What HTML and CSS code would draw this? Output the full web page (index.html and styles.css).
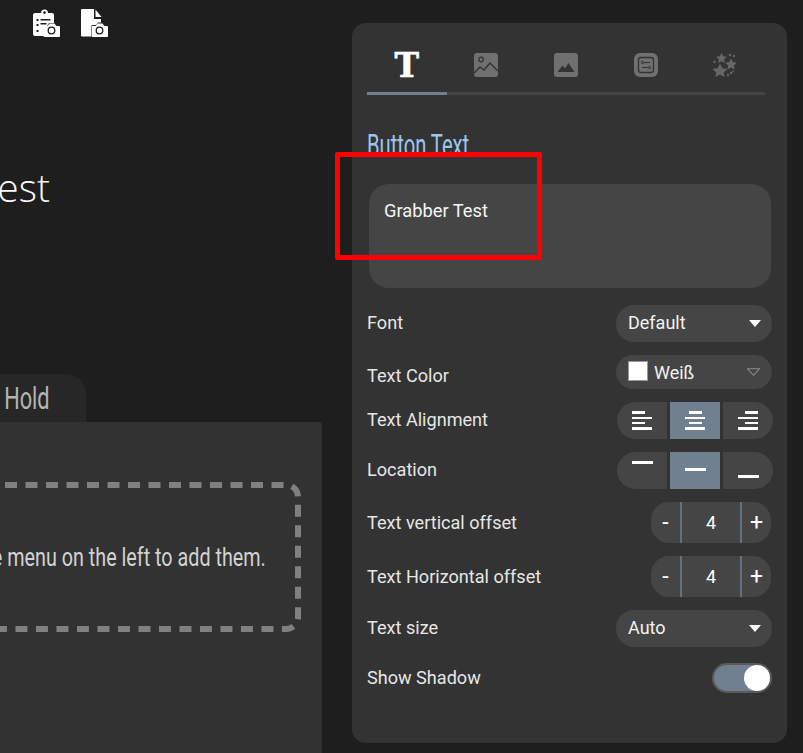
FILE: index.html
```html
<!DOCTYPE html>
<html lang="de">
<head>
<meta charset="utf-8">
<title>Button Editor</title>
<link rel="stylesheet" href="styles.css">
</head>
<body>
<div class="page">
  <main class="stage">
    <div class="tools">
      <svg class="tool" viewBox="0 0 27 28"><path fill="#fff" d="M2 4h6a3.500 3.500 0 0 1 7 0h4a2 2 0 0 1 2 2v8h-5l-2 3h-1a2 2 0 0 0-2 2v8H2a2 2 0 0 1-2-2V6a2 2 0 0 1 2-2z"/><circle cx="11.500" cy="3.600" r="1.300" fill="#1e1e1e"/><path fill="#1e1e1e" d="M3.500 10h2v2h-2zM3.500 15h2v2h-2zM3.500 21h2v2h-2zM7.500 10h10v1.500h-10zM7.500 14h6v1.500h-6z"/><path fill="#fff" d="M11.500 17h3l2-2.500h5l2 2.500h2.500a1 1 0 0 1 1 1v9a1 1 0 0 1-1 1h-14.500a1 1 0 0 1-1-1v-9a1 1 0 0 1 1-1z"/><circle cx="18.500" cy="21.500" r="3.300" fill="none" stroke="#1e1e1e" stroke-width="1.300"/></svg>
      <svg class="tool" viewBox="0 0 27 28"><path fill="#fff" d="M1 0h12v10h7v3.500h-3l-2 2.500h-3a2 2 0 0 0-2 2v9.500H1a1 1 0 0 1-1-1V1a1 1 0 0 1 1-1z"/><path fill="#fff" d="M14.500 .5l6 7.500h-6z"/><path fill="#fff" d="M11.500 17h3l2-2.500h5l2 2.500h2.500a1 1 0 0 1 1 1v9a1 1 0 0 1-1 1h-14.500a1 1 0 0 1-1-1v-9a1 1 0 0 1 1-1z"/><circle cx="18.500" cy="21.500" r="3.300" fill="none" stroke="#1e1e1e" stroke-width="1.300"/></svg>
    </div>
    <h1 class="title"><span>Grabber Test</span></h1>
    <div class="tab"><span class="cond">Press and Hold</span></div>
    <section class="card">
      <div class="drop">
        <svg class="dashes" viewBox="0 0 301 150"><path d="M-15.500 3H286A12 12 0 0 1 298 15V135A12 12 0 0 1 286 147H-100" fill="none" stroke="#808080" stroke-width="6" stroke-dasharray="12 8.500"/></svg>
        <p class="cond-wide">Use the menu on the left to add them.</p>
      </div>
    </section>
  </main>

  <aside class="panel">
    <nav class="tabs">
      <div class="icon-tab active"><span class="t-glyph">T</span></div>
      <div class="icon-tab">
        <svg class="nav-icon" viewBox="0 0 24 24"><rect width="24" height="24" rx="3" fill="#707070"/><circle cx="7" cy="6.500" r="2.300" fill="none" stroke="#333" stroke-width="1.300"/><path d="M0 20l6-6 4 3 6-7 8 8" fill="none" stroke="#333" stroke-width="1.500"/></svg>
      </div>
      <div class="icon-tab">
        <svg class="nav-icon" viewBox="0 0 24 24"><rect width="24" height="24" rx="3" fill="#707070"/><path d="M3.500 19l5-6.500 2.500 3 3.500-5.500 6 9z" fill="#333"/></svg>
      </div>
      <div class="icon-tab">
        <svg class="nav-icon" viewBox="0 0 24 24"><rect width="24" height="24" rx="6" fill="#707070"/><rect x="4.500" y="4.500" width="15" height="15" rx="2.500" fill="none" stroke="#333" stroke-width="1.300"/><circle cx="8.500" cy="9.500" r="1.200" fill="none" stroke="#333"/><circle cx="15.500" cy="14.500" r="1.200" fill="none" stroke="#333"/><path d="M10 9.500h6M8 14.500h6" stroke="#333"/></svg>
      </div>
      <div class="icon-tab">
        <svg class="nav-icon" viewBox="0 0 24 24"><g fill="#666"><path d="M7 10.500l2.400 4.700 5 .7-3.600 3.500.8 4.600-4.600-2.400L2.400 24l.8-4.600L-.4 15.900l5-.7z"/><path d="M18 5.500l1.800 3.600 4 .6-2.900 2.800.7 4-3.600-1.900-3.600 1.900.7-4-2.900-2.800 4-.6z"/><path d="M8.500 0l1.700 3.300 3.600.5-2.600 2.500.6 3.600-3.300-1.700-3.300 1.700.6-3.600-2.600-2.500 3.600-.5z"/><circle cx="17" cy="2" r="1.200"/><circle cx="21" cy="3" r="1.200"/><circle cx="1.500" cy="9" r="1.200"/><circle cx="18" cy="20" r="1.200"/><circle cx="15" cy="22" r="1.200"/><circle cx="20" cy="18.500" r="1"/></g></svg>
      </div>
    </nav>

    <h2 class="section-title"><span class="cond-left">Button Text</span></h2>
    <div class="textbox">Grabber Test</div>

    <div class="rows">
      <div class="row h37"><span class="label">Font</span><div class="select"><span>Default</span><i class="caret"></i></div></div>
      <div class="row h34"><span class="label label-low">Text Color</span><div class="select small"><span class="swatch"></span><span>Weiß</span><svg class="chevron" viewBox="0 0 12 7"><path d="M.5.500h11L6 6.500z" fill="none" stroke="#8a8a8a"/></svg></div></div>
      <div class="row h37"><span class="label">Text Alignment</span>
        <div class="seg">
          <div class="seg-btn"><span class="lines left"><i></i><i></i><i></i><i></i></span></div>
          <div class="seg-btn on"><span class="lines center"><i></i><i></i><i></i><i></i></span></div>
          <div class="seg-btn"><span class="lines right"><i></i><i></i><i></i><i></i></span></div>
        </div>
      </div>
      <div class="row h37"><span class="label">Location</span>
        <div class="seg">
          <div class="seg-btn pos-top"><i class="dash"></i></div>
          <div class="seg-btn on pos-mid"><i class="dash"></i></div>
          <div class="seg-btn pos-bottom"><i class="dash"></i></div>
        </div>
      </div>
      <div class="row h41"><span class="label">Text vertical offset</span><div class="stepper"><b>-</b><span>4</span><b>+</b></div></div>
      <div class="row h41"><span class="label">Text Horizontal offset</span><div class="stepper"><b>-</b><span>4</span><b>+</b></div></div>
      <div class="row h37"><span class="label">Text size</span><div class="select"><span>Auto</span><i class="caret"></i></div></div>
      <div class="row h30 toggle-row"><span class="label">Show Shadow</span><div class="toggle"><i></i></div></div>
    </div>
  </aside>
</div>
<div class="marker"></div>
</body>
</html>
```
FILE: styles.css
```css
* { box-sizing: border-box; }
html, body { margin: 0; height: 100%; }
body {
  background: #1e1e1e;
  color: #fff;
  font-family: Roboto, "Liberation Sans", sans-serif;
  overflow: hidden;
}
.page { display: flex; width: 803px; height: 753px; }

.stage { width: 352px; flex: none; display: flex; flex-direction: column; overflow: hidden; }
.tools { display: flex; gap: 21px; padding: 9px 0 0 33px; height: 37px; flex: none; }
.tool { width: 27px; height: 28px; display: block; }
.title {
  margin: 125px 0 0;
  width: 50px;
  height: 50px;
  display: flex;
  justify-content: flex-end;
  font: 350 39px/50px "Open Sans", sans-serif;
  color: #f8f8f8;
  white-space: nowrap;
}
.cond { display: inline-block; transform: scaleX(.68); transform-origin: right center; }
.cond-wide { display: inline-block; transform: scaleX(.76); transform-origin: right center; }
.cond-left { display: inline-block; transform: scaleX(.65); transform-origin: left center; white-space: nowrap; }
.tab {
  margin-top: 162px;
  width: 86px;
  height: 48px;
  background: #272727;
  border-top-right-radius: 20px;
  display: flex;
  justify-content: flex-end;
  padding-right: 36px;
  white-space: nowrap;
  font: 400 32px/48px Roboto, sans-serif;
  color: #b4b4b4;
}
.card {
  width: 322px;
  flex: 1;
  background: #323232;
  border-top-right-radius: 3px;
  padding-top: 60px;
}
.drop {
  position: relative;
  width: 301px;
  height: 150px;
  display: flex;
  align-items: center;
  justify-content: flex-end;
  padding-right: 35px;
}
.dashes { position: absolute; left: 0; top: 0; width: 301px; height: 150px; overflow: visible; }
.drop p {
  margin: 0;
  white-space: nowrap;
  font: 400 26px/30px Roboto, sans-serif;
  color: #d2d2d2;
  flex: none;
}

.panel {
  margin-top: 23px;
  width: 435px;
  height: 720px;
  background: #333;
  border-radius: 14px;
  padding: 30px 15px 0;
  flex: none;
}
.tabs {
  display: flex;
  width: 398px;
  height: 42px;
  border-bottom: 3px solid #444;
}
.icon-tab {
  width: 79.600px;
  height: 42px;
  flex: none;
  display: flex;
  justify-content: center;
}
.icon-tab.active { border-bottom: 3px solid #708090; }
.t-glyph {
  font: 700 33px/26px "DejaVu Serif", serif;
  height: 24px;
  -webkit-text-stroke: .6px #fff;
}
.nav-icon { width: 24px; height: 24px; display: block; }
.section-title {
  margin: 36px 0 0;
  height: 30px;
  font: 400 31px/29px Roboto, sans-serif;
  color: #9cc6ee;
  overflow: hidden;
}
.textbox {
  margin: 23px 1px 0 2px;
  height: 104px;
  background: #454545;
  border-radius: 20px;
  padding: 15px;
  font-size: 18.300px;
  line-height: 24px;
  color: #f5f5f5;
}
.rows { display: flex; flex-direction: column; gap: 13px; margin-top: 17px; }
.row { display: flex; align-items: center; justify-content: space-between; }
.h37 { height: 37px; }
.h34 { height: 34px; }
.h41 { height: 41px; }
.h30 { height: 30px; }
.label { font-size: 18.100px; color: #e6e6e6; }
.h37 .label, .h30 .label { margin-bottom: 2px; }
.label-low { position: relative; top: 3px; }
.toggle-row { margin-top: 3px; }

.select {
  width: 156px;
  height: 100%;
  background: #454545;
  border-radius: 18px;
  display: flex;
  align-items: center;
  padding: 0 12px;
  font-size: 18px;
  color: #f2f2f2;
}
.h37 .select { padding-bottom: 2px; }
.select > span:first-child:not(.swatch) { flex: 1; }
.caret {
  width: 0; height: 0;
  border-left: 6.500px solid transparent;
  border-right: 6.500px solid transparent;
  border-top: 7.500px solid #fff;
  margin-right: -1px;
  margin-top: 2px;
}
.swatch { width: 20px; height: 20px; background: #fff; border: 1px solid #9a9a9a; margin-right: 6px; flex: none; position: relative; top: -1px; }
.select.small .chevron { width: 13px; height: 8px; margin-left: auto; }
.seg { display: flex; gap: 3px; margin-right: -1px; height: 100%; }
.seg-btn { width: 50px; background: #454545; display: flex; align-items: center; justify-content: center; }
.seg-btn:first-child { border-radius: 20px 0 0 20px; }
.seg-btn:last-child { border-radius: 0 20px 20px 0; }
.seg-btn.on { background: #708090; }
.lines { width: 20px; display: flex; flex-direction: column; gap: 2.700px; }
.lines i { display: block; height: 2.500px; background: #fff; width: 20px; }
.lines i:nth-child(odd) { width: 13px; }
.lines.center { align-items: center; }
.lines.right { align-items: flex-end; }
.dash { display: block; width: 21px; height: 3px; background: #fff; }
.pos-top { align-items: flex-start; padding-top: 9px; }
.pos-mid { padding-bottom: 3px; }
.pos-bottom { align-items: flex-end; padding-bottom: 11px; }

.stepper {
  width: 120px;
  height: 100%;
  margin-right: 1px;
  background: #454545;
  border-radius: 18px;
  display: flex;
  align-items: center;
  font-size: 18px;
}
.stepper b { font-weight: 400; width: 29px; text-align: center; font-size: 23px; line-height: 39px; }
.stepper span {
  width: 62px;
  height: 100%;
  text-align: center;
  line-height: 41px;
  border-left: 2px solid #64727f;
  border-right: 2px solid #64727f;
}
.toggle {
  width: 60px;
  height: 30px;
  border-radius: 15px;
  background: #708090;
  border: 2px solid #5a5a5a;
  display: flex;
  justify-content: flex-end;
  align-items: center;
}
.toggle i { width: 26px; height: 26px; border-radius: 50%; background: #fff; }

.marker {
  position: absolute;
  left: 335px;
  top: 152px;
  width: 207px;
  height: 108px;
  border: 5px solid #f00;
  border-radius: 2px;
}
```
